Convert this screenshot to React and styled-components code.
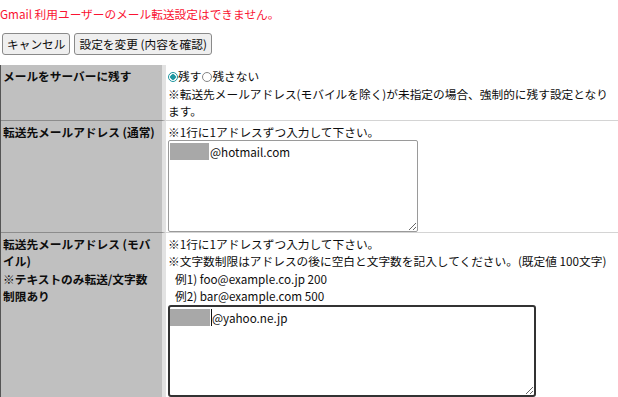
import React from "react";
import styled, { createGlobalStyle } from "styled-components";

const GlobalStyle = createGlobalStyle`
  body {
    margin: 0;
    font-family: "Noto Sans CJK JP", "Noto Sans", sans-serif;
    font-size: 11.7px;
    line-height: 17.4px;
    color: #0d0d0d;
    background: #fff;
  }
`;

const Notice = styled.p`
  margin: 0;
  padding-top: 5px;
  color: #fa1432;
`;

const Toolbar = styled.div`
  display: flex;
  gap: 4px;
  margin: 11px 0 0 2px;
`;

const Button = styled.button`
  height: 22px;
  padding: 0 4px;
  font: inherit;
  line-height: 20px;
  color: #0d0d0d;
  background: #efefef;
  border: 1px solid #8a8a8a;
  border-radius: 3px;
`;

const Table = styled.div`
  margin-top: 10px;
  border-left: 1px solid #555;
`;

const Row = styled.div`
  display: grid;
  grid-template-columns: 165px 1fr;
`;

const Head = styled.div`
  padding: 2px 4px 0 2px;
  font-weight: bold;
  color: #0d0d0d;
  background: #c0c0c0;
  border-right: 4px solid #e2e2e2;
  border-bottom: 1px solid #8c8c8c;
`;

const Cell = styled.div`
  padding: 2px 3px 0 2px;
  border-bottom: 1px solid #d4d4d4;
`;

const Line = styled.div`
  padding-left: ${(p) => (p.$indent ? "7px" : "0")};
`;

const Radio = styled.span`
  display: inline-block;
  box-sizing: border-box;
  width: 10px;
  height: 10px;
  border-radius: 50%;
  vertical-align: -1px;
  border: 1px solid ${(p) => (p.$checked ? "#1e96a0" : "#858585")};
  background: ${(p) =>
    p.$checked
      ? "radial-gradient(circle, #1e96a0 0 2.5px, #fff 3px)"
      : "#fff"};
`;

const RadioLabel = styled.span`
  margin-right: 1px;
`;

const AreaWrap = styled.div`
  position: relative;
  width: ${(p) => p.$w}px;
  height: 92px;
`;

const Area = styled.textarea`
  display: block;
  box-sizing: border-box;
  width: 100%;
  height: 100%;
  margin: 0;
  padding: 2px 1px;
  font: 11.7px/17px "Noto Sans CJK JP", "Noto Sans", sans-serif;
  color: #0d0d0d;
  text-indent: ${(p) => (p.$focused ? "41px" : "40px")};
  border: ${(p) => (p.$focused ? "2px solid #333" : "1px solid #9a9a9a")};
  border-radius: ${(p) => (p.$focused ? "3px" : "2px")};
  resize: both;
  outline: none;
  background: #fff;
`;

const Mask = styled.span`
  position: absolute;
  left: 2px;
  top: ${(p) => (p.$focused ? "4px" : "3px")};
  width: ${(p) => (p.$focused ? "40px" : "39px")};
  height: 17px;
  background: #a8a8a8;
`;

const Caret = styled.span`
  position: absolute;
  left: 43px;
  top: 4px;
  width: 1px;
  height: 17px;
  background: #111;
`;

export default function App() {
  return (
    <>
      <GlobalStyle />
      <Notice>Gmail 利用ユーザーのメール転送設定はできません。</Notice>
      <Toolbar>
        <Button type="button">キャンセル</Button>
        <Button type="button">設定を変更 (内容を確認)</Button>
      </Toolbar>
      <Table>
        <Row>
          <Head>メールをサーバーに残す</Head>
          <Cell>
            <Line>
              <Radio $checked />
              <RadioLabel>残す</RadioLabel>
              <Radio />
              <span>残さない</span>
            </Line>
            <Line>
              ※転送先メールアドレス(モバイルを除く)が未指定の場合、強制的に残す設定となります。
            </Line>
          </Cell>
        </Row>
        <Row>
          <Head>転送先メールアドレス (通常)</Head>
          <Cell>
            <Line>※1行に1アドレスずつ入力して下さい。</Line>
            <AreaWrap $w={250}>
              <Area defaultValue="@hotmail.com" />
              <Mask />
            </AreaWrap>
          </Cell>
        </Row>
        <Row>
          <Head>
            転送先メールアドレス (モバイル)
            <br />
            ※テキストのみ転送/文字数制限あり
          </Head>
          <Cell>
            <Line>※1行に1アドレスずつ入力して下さい。</Line>
            <Line>
              ※文字数制限はアドレスの後に空白と文字数を記入してください。(既定値 100文字)
            </Line>
            <Line $indent>例1) foo@example.co.jp 200</Line>
            <Line $indent>例2) bar@example.com 500</Line>
            <AreaWrap $w={368}>
              <Area $focused defaultValue="@yahoo.ne.jp" />
              <Mask $focused />
              <Caret />
            </AreaWrap>
          </Cell>
        </Row>
      </Table>
    </>
  );
}
